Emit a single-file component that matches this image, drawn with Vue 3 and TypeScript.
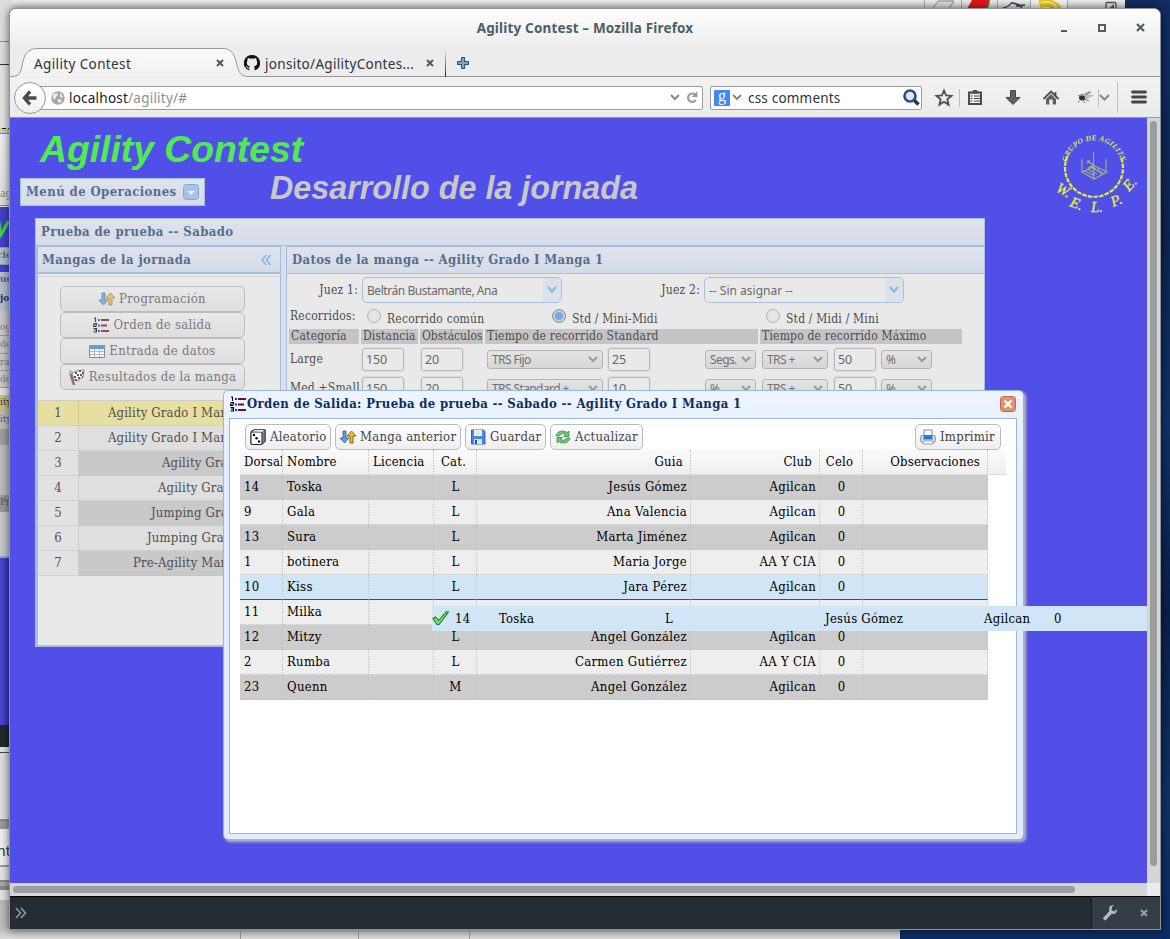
<script setup lang="ts">
interface Entry { dorsal: string; name: string; cat: string; guide: string; club: string; target?: boolean }

const entries: Entry[] = [
  { dorsal: '14', name: 'Toska', cat: 'L', guide: 'Jesús Gómez', club: 'Agilcan' },
  { dorsal: '9', name: 'Gala', cat: 'L', guide: 'Ana Valencia', club: 'Agilcan' },
  { dorsal: '13', name: 'Sura', cat: 'L', guide: 'Marta Jiménez', club: 'Agilcan' },
  { dorsal: '1', name: 'botinera', cat: 'L', guide: 'Maria Jorge', club: 'AA Y CIA' },
  { dorsal: '10', name: 'Kiss', cat: 'L', guide: 'Jara Pérez', club: 'Agilcan', target: true },
  { dorsal: '11', name: 'Milka', cat: '', guide: '', club: '' },
  { dorsal: '12', name: 'Mitzy', cat: 'L', guide: 'Angel González', club: 'Agilcan' },
  { dorsal: '2', name: 'Rumba', cat: 'L', guide: 'Carmen Gutiérrez', club: 'AA Y CIA' },
  { dorsal: '23', name: 'Quenn', cat: 'M', guide: 'Angel González', club: 'Agilcan' },
]

const rounds: string[] = [
  'Agility Grado I Manga 1',
  'Agility Grado I Manga 2',
  'Agility Grado II',
  'Agility Grado III',
  'Jumping Grado II',
  'Jumping Grado III',
  'Pre-Agility Manga 1',
]
const roundIndent: number[] = [29, 29, 83, 79, 72, 68, 54]

const measures = [
  { cat: 'Large', dist: '150', obst: '20', trs: 'TRS Fijo', val: '25', unit: 'Segs.', trm: 'TRS +', max: '50', pct: '%' },
  { cat: 'Med +Small', dist: '150', obst: '20', trs: 'TRS Standard +', val: '10', unit: '%', trm: 'TRS +', max: '50', pct: '%' },
]
</script>

<template>
  <div class="desktop">
    <div class="back-top">
      <svg width="145" height="10" viewBox="0 0 145 10">
        <path d="M.5 0v10M37.500 0v10M73.500 0v10M106.500 0v10M143.500 0v10" stroke="#aaa" />
        <path d="M107 0h36v10h-36z" fill="#f3f3f3" />
        <path d="M14 1h16l-6 9H8z" fill="#ddd" stroke="#888" />
        <path d="M48 0h18l-4 9H43z" fill="#e01616" /><path d="M66 1l-2 8h-4z" fill="#378337" />
        <path d="M79 8q6-1 9-6M88 3q8 1 10 5M92 6l9-1" fill="none" stroke="#345" stroke-width="1.300" />
        <path d="M115 2q12-4 21 6M116 6q10-4 14 4" fill="none" stroke="#eac81c" stroke-width="4" /><path d="M117 3q10-3 16 4" fill="none" stroke="#fbf08c" stroke-width="1.500" />
      </svg>
      <svg class="tray" width="12" height="8"><path d="M1 8V2.500q0-1 1-1h8q1 0 1 1V8" fill="none" stroke="#555" stroke-width="1.300" /><path d="M9 3v5H3.500z" fill="#555" /></svg>
    </div>
    <div class="back-left">
      <div class="strip s1"></div><div class="strip s2"></div>
      <div class="strip s3"><i>ag</i></div><div class="strip s4"><b>y</b></div>
      <div class="strip s5"><em>cio</em></div>
      <div class="strip s6"><em>ue</em><em>jo</em></div>
      <div class="strip s7"><span>og</span><span>der</span><span>rad</span><span>do</span></div>
      <div class="strip s8">ity</div><div class="strip s9">ity</div><div class="strip s10">Pre</div>
      <div class="strip s11"></div><div class="strip s12"></div>
      <div class="strip s14"></div><div class="strip s15">nt</div><div class="strip s16"></div>
    </div>
    <div class="back-bottom"><i></i><i></i><i></i></div>

    <div class="window">
      <div class="titlebar">
        <span class="window-title">Agility Contest – Mozilla Firefox</span>
        <svg class="wbtns" width="86" height="12" viewBox="0 0 86 12">
          <path d="M2 10h6" stroke="#4a6068" stroke-width="2" />
          <rect x="40" y="4" width="6" height="6" fill="none" stroke="#4a6068" stroke-width="2" />
          <path d="M78 3l7 7M85 3l-7 7" stroke="#4a6068" stroke-width="2.200" />
        </svg>
      </div>

      <div class="tabs">
        <svg class="tabshape" width="1150" height="30" viewBox="0 0 1150 30">
          <defs><linearGradient id="tg" x2="0" y2="1"><stop stop-color="#fafafa" /><stop offset="1" stop-color="#f0f0f0" /></linearGradient>
            <linearGradient id="sep" x2="0" y2="1"><stop stop-color="#ececec" /><stop offset="1" stop-color="#222" /></linearGradient></defs>
          <path d="M0 28.500H2C13 28.500 11 18 14 10Q17 .5 27 .5H213Q222 .5 225 10C228 18 227 28.500 238 28.500H1150V30H0z" fill="url(#tg)" />
          <path d="M0 28.500H2C13 28.500 11 18 14 10Q17 .5 27 .5H213Q222 .5 225 10C228 18 227 28.500 238 28.500H1150" fill="none" stroke="#989898" />
          <rect x="435" y="1" width="1" height="28" fill="url(#sep)" />
        </svg>
        <span class="tab-text t1">Agility Contest</span>
        <svg class="x x1" width="8" height="8"><path d="M1 1l6 6M7 1L1 7" stroke="#555" stroke-width="2" /></svg>
        <svg class="gh" width="16" height="16" viewBox="0 0 16 16"><path fill="#111" d="M8 0a8 8 0 0 0-2.700 15.600v-2.200c-2 .4-2.600-.7-2.900-1.600-.3-.6-.7-.8-1-1.100 1.200-.3 1.600 1 2.200 1.600.6.500 1.300.3 1.800.1.100-.6.300-.9.600-1.200C4 11 2.800 10 2.800 7.400c0-1 .4-1.700.9-2.300-.2-.7-.2-1.500.1-2.200.9 0 1.700.5 2.300.9 1.300-.3 2.500-.3 3.800 0 .7-.5 1.500-.9 2.300-.9.300.7.300 1.500.1 2.200.6.700.9 1.400.9 2.300 0 2.600-1.300 3.600-3.300 3.800.5.500.7 1.100.7 2v2.400A8 8 0 0 0 8 0" /></svg>
        <span class="tab-text t2">jonsito/AgilityContes...</span>
        <svg class="x x2" width="8" height="8"><path d="M1 1l6 6M7 1L1 7" stroke="#555" stroke-width="2" /></svg>
        <svg class="plus" width="12" height="12"><path d="M4.500.5h3v4h4v3h-4v4h-3v-4h-4v-3h4z" fill="#7fa3d6" stroke="#1c4a86" /></svg>
      </div>

      <div class="navbar">
        <div class="back"><svg width="16" height="16"><path d="M8 1.500L2.500 8L8 14.500M3 8h11.500" fill="none" stroke="#4a4a4a" stroke-width="3.400" /></svg></div>
        <div class="url">
          <svg width="14" height="14" viewBox="0 0 14 14"><circle cx="7" cy="7" r="6.700" fill="#a6a6a6" /><path d="M2 3l4-1 1 2-2 2-1 3-2-2zM9 2l3 3-1 2-2-1zM7 8l4 1-2 3-2-1z" fill="#ececec" /></svg>
          <span class="url-text">localhost<i>/agility/#</i></span>
          <svg class="chev" width="10" height="7"><path d="M1 1l4 4 4-4" fill="none" stroke="#888" stroke-width="2" /></svg>
          <svg class="reload" width="12" height="13"><path d="M9 3.500A4.200 4.200 0 1 0 9.800 9" fill="none" stroke="#8fa0ac" stroke-width="2.200" /><path d="M11.500 0v6h-6z" fill="#8fa0ac" /></svg>
        </div>
        <div class="search">
          <span class="g">g</span>
          <svg width="10" height="7"><path d="M1 1l4 4 4-4" fill="none" stroke="#888" stroke-width="2" /></svg>
          <span class="search-text">css comments</span>
          <svg class="lens" width="17" height="17"><path d="M11 11l4.500 4.500" stroke="#333" stroke-width="3.500" /><circle cx="7" cy="7" r="5.500" fill="#dce8f7" stroke="#29499b" stroke-width="2.600" /></svg>
        </div>
        <svg class="navicons" width="220" height="34" viewBox="0 0 220 34">
          <path d="M13 9.500l2.100 5 5.400.4-4.200 3.500 1.300 5.300-4.600-3-4.600 3 1.300-5.300-4.200-3.500 5.400-.4z" fill="none" stroke="#4b4b4b" stroke-width="1.800" />
          <path d="M28.500 8v18" stroke="#bbb" />
          <path d="M38 11.500h12v11.500h-12z" fill="#eee" stroke="#4b4b4b" stroke-width="2" /><path d="M40 10.500h2v-1.500h4v1.500h2v2h-8z" fill="#4b4b4b" /><path d="M39.500 15h2M43 15h6M39.500 17.500h2M43 17.500h6M39.500 20h2M43 20h6" stroke="#4b4b4b" stroke-width="1.200" />
          <path d="M79.500 9.500h5v7h4.500L82 23.500l-7-7h4.500z" fill="#606060" stroke="#444" />
          <path d="M112.500 18L120 10.500l7.500 7.500M124.500 11v4" fill="none" stroke="#4b4b4b" stroke-width="1.800" /><path d="M115 18l5-5 5 5v5.500h-3.300v-5h-3.400v5H115z" fill="#606060" />
          <path d="M150 14l8-4 3 1-4 3 6 0-7 4-5 0z" fill="#bbb" /><path d="M147 15l5-2M153 18l5 2M149 20l-2 1M154 14l5-3M152 19l2 3" stroke="#777" /><ellipse cx="151" cy="17" rx="3" ry="2.400" fill="#333" />
          <path d="M167.500 8v18" stroke="#bbb" /><path d="M169 14l4.500 4.500L178 14" fill="none" stroke="#888" stroke-width="2" />
          <path d="M186.500 1v31" stroke="#b9c3cc" />
          <path d="M201.500 11h13M201.500 16h13M201.500 21h13" stroke="#454545" stroke-width="2.800" stroke-linecap="round" />
        </svg>
      </div>

      <div class="middle">
        <div class="page">
          <h1>Agility Contest</h1>
          <div class="menu-panel"><span>Menú de Operaciones</span><i class="tool"><svg width="16" height="16"><rect x=".5" y=".5" width="15" height="15" rx="3" fill="#a8c2e4" stroke="#85a7d5" /><path d="M4 7h8l-4 4z" fill="#eef" /></svg></i></div>
          <h2>Desarrollo de la jornada</h2>

          <section class="main-panel">
            <header class="ph">Prueba de prueba -- Sabado</header>
            <div class="split">
              <div class="west">
                <header class="ph"><span>Mangas de la jornada</span><svg width="10" height="10"><path d="M5 0L1 5l4 5M9.500 0l-4 5 4 5" fill="none" stroke="#82b5df" stroke-width="1.500" /></svg></header>
                <div class="west-body">
                  <div class="btns">
                    <button class="lb"><svg class="fade" width="16" height="14"><path d="M3 1h3v7h3l-4.500 5L0 8h3z" fill="#5ba0d8" stroke="#2b5f98" stroke-width=".8" /><path d="M10 13h3V6h3l-4.500-5L7 6h3z" fill="#f0b631" stroke="#8c6412" stroke-width=".8" /></svg>Programación</button>
                    <button class="lb"><svg class="fade" width="16" height="16" viewBox="0 0 16 16"><path d="M1 1h1.500v4M0.500 6.500h3v1.500h-3v1.500h3M.5 11.500h3v3.500h-3M1 13h2" fill="none" stroke="#000" stroke-width="1.100" /><path d="M5 3h2M5 8.500h2M5 14h2" stroke="#22f" stroke-width="2" /><path d="M8 3h8M8 8.500h6M8 14h8" stroke="#601327" stroke-width="2" /></svg>Orden de salida</button>
                    <button class="lb"><svg class="fade" width="16" height="13"><path d="M.5.5h15v12H.5z" fill="#fff" stroke="#567" /><path d="M0 0h16v4H0z" fill="#2784d0" /><path d="M1 6.500h14M1 9.500h14M5.500 4v8M10.500 4v8" stroke="#9ab" /></svg>Entrada de datos</button>
                    <button class="lb"><svg class="fade" width="16" height="16"><path d="M1 3l4 13" stroke="#73412f" stroke-width="2.500" /><path d="M3 4q4-3 12-3l-1 7q-3 1-5 4l-4-1z" fill="#fff" stroke="#222" stroke-width=".7" /><path d="M6 3h2v2H6zM10 1h2v2h-2zM13 3h2v2h-2zM8 5h2v2H8zM11 5h2v2h-2zM5 7h2v2H5zM9 8h2v2H9zM6 10h2v2H6zM13 7h1v2h-1z" fill="#222" /><circle cx="1.500" cy="3" r="2" fill="#7bc67b" /></svg>Resultados de la manga</button>
                  </div>
                  <div class="rounds">
                    <div v-for="(r, i) in rounds" :key="r" class="round" :class="{ current: i === 0, dark: i > 0 && i % 2 === 0 }">
                      <span class="num">{{ i + 1 }}</span>
                      <span class="rname" :style="{ paddingLeft: roundIndent[i] + 'px' }">{{ r }}</span>
                    </div>
                  </div>
                </div>
              </div>
              <div class="center">
                <header class="ph">Datos de la manga -- Agility Grado I Manga 1</header>
                <div class="form">
                  <div class="judges">
                    <label>Juez 1:</label><div class="combo tight"><span>Beltrán Bustamante, Ana</span><i><svg width="10" height="8"><path d="M1 1l4 4.500L9 1" fill="none" stroke="#86b9e0" stroke-width="2.200" /></svg></i></div>
                    <label class="j2">Juez 2:</label><div class="combo"><span>-- Sin asignar --</span><i><svg width="10" height="8"><path d="M1 1l4 4.500L9 1" fill="none" stroke="#86b9e0" stroke-width="2.200" /></svg></i></div>
                  </div>
                  <div class="radios">
                    <span class="rl">Recorridos:</span>
                    <i class="radio"></i><span>Recorrido común</span>
                    <i class="radio on"></i><span class="wider">Std / Mini-Midi</span>
                    <i class="radio"></i><span>Std / Midi / Mini</span>
                  </div>
                  <div class="heads"><span>Categoría</span><span>Distancia</span><span>Obstáculos</span><span>Tiempo de recorrido Standard</span><span>Tiempo de recorrido Máximo</span></div>
                  <div v-for="m in measures" :key="m.cat" class="mrow">
                    <span class="cat">{{ m.cat }}</span>
                    <span class="inp a">{{ m.dist }}</span><span class="inp b">{{ m.obst }}</span>
                    <span class="pick w116">{{ m.trs }}<svg width="10" height="7"><path d="M1 1l4 4 4-4" fill="none" stroke="#999" stroke-width="2" /></svg></span>
                    <span class="inp c">{{ m.val }}</span>
                    <span class="pick w51">{{ m.unit }}<svg width="10" height="7"><path d="M1 1l4 4 4-4" fill="none" stroke="#999" stroke-width="2" /></svg></span>
                    <span class="pick w66">{{ m.trm }}<svg width="10" height="7"><path d="M1 1l4 4 4-4" fill="none" stroke="#999" stroke-width="2" /></svg></span>
                    <span class="inp d">{{ m.max }}</span>
                    <span class="pick w51b">{{ m.pct }}<svg width="10" height="7"><path d="M1 1l4 4 4-4" fill="none" stroke="#999" stroke-width="2" /></svg></span>
                  </div>
                </div>
              </div>
            </div>
          </section>

          <svg class="club" width="92" height="88" viewBox="0 0 92 88">
            <defs><path id="arcTop" d="M17.500 33A28 28 0 0 1 72.500 33" /></defs>
            <path d="M18.500 26A29 29 0 1 0 71.500 26" fill="none" stroke="#e4ee3c" stroke-width="2.200" stroke-dasharray="4.500 1.200" />
            <text class="ct" textLength="74"><textPath href="#arcTop" startOffset="1" textLength="74">GRUPO DE AGILITY</textPath></text>
            <path d="M33 29v13M44.500 22v26M57 29v13M33 42l12 7 13-7-12-6zM36 41l10 5M38 39l10 5M41 37l10 5M38 31l5 3 4 6 9 4M38 33l3-3M39 38l6-3M48 37l4 7" fill="none" stroke="#a0b580" stroke-width="1.100" />
            <g class="cb">
              <text transform="translate(6 61) rotate(28)">W.</text><text transform="translate(20 76) rotate(20)">E.</text>
              <text transform="translate(42 82)">L.</text><text transform="translate(64 77) rotate(-22)">P.</text><text transform="translate(80 62) rotate(-48)">E.</text>
            </g>
          </svg>

          <section class="dialog">
            <header class="dh">
              <svg width="16" height="16" viewBox="0 0 16 16"><path d="M1 1h1.500v4M0.500 6.500h3v1.500h-3v1.500h3M.5 11.500h3v3.500h-3M1 13h2" fill="none" stroke="#000" stroke-width="1.100" /><path d="M5 3h2M5 8.500h2M5 14h2" stroke="#22f" stroke-width="2" /><path d="M8 3h8M8 8.500h6M8 14h8" stroke="#601327" stroke-width="2" /></svg>
              <span>Orden de Salida: Prueba de prueba -- Sabado -- Agility Grado I Manga 1</span>
              <svg class="close" width="16" height="16"><rect x=".5" y=".5" width="15" height="15" rx="3" fill="#e2906f" stroke="#b9694c" /><path d="M4.500 4.500l7 7M11.500 4.500l-7 7" stroke="#fff" stroke-width="2.400" /></svg>
            </header>
            <div class="db">
              <div class="tb">
                <button class="b1"><svg width="16" height="16"><path d="M1 2.500L4 .8h11.200v11.500l-3 3H1z" fill="#71899a" stroke="#222" /><rect x="1" y="3" width="11" height="12.500" rx="1.500" fill="#fff" stroke="#222" /><path d="M2 2.500L5 1h9l-2 2z" fill="#dde8f0" /><circle cx="4" cy="6" r="1.200" /><circle cx="6.500" cy="9.200" r="1.200" /><circle cx="9" cy="12.500" r="1.200" /></svg>Aleatorio</button>
                <button class="b2"><svg width="16" height="14"><path d="M3 1h3v7h3l-4.500 5L0 8h3z" fill="#5ba0d8" stroke="#2b5f98" stroke-width=".8" /><path d="M10 13h3V6h3l-4.500-5L7 6h3z" fill="#f8b928" stroke="#6b4a08" stroke-width=".8" /></svg>Manga anterior</button>
                <button class="b3"><svg width="16" height="16"><path d="M1.500 1h12l1.500 1.500V15H1.500z" fill="#4a83f0" stroke="#2d62c5" /><path d="M4 1h8v6H4z" fill="#fff" /><path d="M4 10h8v5H4z" fill="#dce5f4" /><path d="M5 11h2v4H5z" fill="#2a55a5" /><path d="M5 3h6M5 5h6" stroke="#bcc" /></svg>Guardar</button>
                <button class="b4"><svg width="16" height="16"><path d="M1 7q1-5 7-5 2 0 4 1.500L14 2v5.500H8.500l2-2Q6 3.500 4.500 7z" fill="#74c476" stroke="#3d8f45" stroke-width=".8" /><path d="M15 9q-1 5-7 5-2 0-4-1.500L2 14V8.500h5.500l-2 2Q10 12.500 11.500 9z" fill="#74c476" stroke="#3d8f45" stroke-width=".8" /></svg>Actualizar</button>
                <button class="b5"><svg width="16" height="16"><path d="M4 1h8v6H4z" fill="#fff" stroke="#889" /><rect x=".7" y="6.500" width="14.600" height="7" rx="2" fill="#dfe3ea" stroke="#7e8796" /><path d="M4 6h8l1 4.500H3z" fill="#1683ea" /><path d="M3 12h10v3H3z" fill="#fff" stroke="#99a" /></svg>Imprimir</button>
              </div>
              <div class="grid-head gr"><span>Dorsal</span><span>Nombre</span><span>Licencia</span><span class="c">Cat.</span><span class="r">Guia</span><span class="r">Club</span><span class="c">Celo</span><span class="r">Observaciones</span></div>
              <div v-for="(e, i) in entries" :key="e.dorsal" class="gr grow" :class="{ dark: i % 2 === 0 && !e.target, target: e.target }">
                <span>{{ e.dorsal }}</span><span>{{ e.name }}</span><span></span><span class="c">{{ e.cat }}</span><span class="r">{{ e.guide }}</span><span class="r">{{ e.club }}</span><span class="c">{{ e.club ? '0' : '' }}</span><span></span>
              </div>
            </div>
          </section>

          <div class="drag">
            <svg width="18" height="16"><path d="M1 8.500l2.500-1.500 3 3.500L14.500 1.500l2 .5L7 14.500H5z" fill="#7be05f" stroke="#1e7d2e" stroke-width="1.100" /></svg>
            <span class="d1">14</span><span class="d2">Toska</span><span class="d3">L</span><span class="d4">Jesús Gómez</span><span class="d5">Agilcan</span><span class="d6">0</span>
          </div>
        </div>
        <div class="vs"><i></i></div>
      </div>
      <div class="hs"><i></i><b></b></div>
      <div class="devbar">
        <svg width="12" height="12"><path d="M1 1l4.500 5L1 11M6 1l4.500 5L6 11" fill="none" stroke="#8d959c" stroke-width="1.700" /></svg>
        <div class="devtools">
          <svg width="16" height="16"><path d="M2 14.500L9 7" stroke="#b5bbc0" stroke-width="3.400" /><path d="M14.500 4.500L12 6.500 9.500 5 10 2l2-1.500Q8-.5 7 3.500q0 5 4 5.500 4 0 4-5z" fill="#b5bbc0" /></svg>
          <svg width="8" height="8"><path d="M1 1l6 6M7 1L1 7" stroke="#9aa1a6" stroke-width="2" /></svg>
        </div>
      </div>
    </div>
  </div>
</template>

<style>
html, body { margin: 0; overflow: hidden; }
</style>

<style scoped>
* { box-sizing: border-box; }
svg { display: block; flex: none; }
i, em { font-style: normal; }
.desktop { position: relative; width: 1170px; height: 939px; overflow: hidden; background: linear-gradient(#102c62, #0c2452 25%, #0f3066 45%, #091f4c 65%, #0f3064 85%, #0c2b60); font-family: "DejaVu Serif Condensed", "DejaVu Serif", serif; font-size: 13px; white-space: nowrap; }
.back-top { position: absolute; left: 0; top: 0; width: 1125px; height: 40px; background: linear-gradient(#ededed, #d4d4d4 9px); }
.back-top svg { position: absolute; left: 924px; top: 0; }
.back-top .tray { left: 1105px; top: 1px; }
.back-bottom { position: absolute; left: 0; top: 900px; width: 900px; height: 39px; background: linear-gradient(#bbb 28px, #ddd); display: flex; padding-left: 240px; align-items: flex-end; }
.back-bottom i { width: 118px; height: 8px; border-left: 1px solid #999; }
.back-bottom i:nth-child(2) { width: 111px; }
.back-left { position: absolute; left: 0; top: 0; width: 12px; height: 939px; background: linear-gradient(#ddd 60px, #e4e4e4); overflow: hidden; }
.strip { position: absolute; left: 0; width: 10px; overflow: hidden; color: #555; font-size: 10px; line-height: 14px; }
.s1 { top: 41px; height: 24px; background: #ddd; border-top: 1px solid #888; border-bottom: 1px solid #243542; }
.s2 { top: 66px; height: 68px; background: #e4e4e4; border-bottom: 1px solid #888; box-shadow: inset 0 -4px 0 #ccc; }
.s2::after { content: ""; display: block; height: 1px; margin-top: 62px; background: repeating-linear-gradient(90deg, #e7df2c 0 2px, #111 2px 6px); }
.s3 { top: 134px; height: 72px; padding-top: 52px; background: linear-gradient(#eee, #ddd); font-family: "Noto Sans", sans-serif; border-bottom: 1px solid #888; color: #888; }
.s4 { top: 207px; height: 40px; background: #4440c8; color: #43d33d; font: italic bold 26px/38px "Liberation Sans", sans-serif; }
.s4 b { margin-left: -5px; }
.s5 { top: 247px; height: 18px; background: #b5bccb; border: 1px solid #86a2ca; border-width: 1px 0; }
.s6 { top: 265px; height: 46px; background: #b6bccb; border-top: 7px solid #4440c8; display: flex; flex-direction: column; gap: 5px; font-weight: bold; color: #526280; }
.s6 em:last-child { color: #1c3560; }
.s5 em { font-weight: bold; color: #526280; margin-left: -3px; }
.s7 { top: 311px; height: 77px; padding-top: 9px; background: #c7c7c7; display: flex; flex-direction: column; gap: 1px; }
.s7 span { height: 17px; border-bottom: 1px solid #999; color: #777; }
.s8 { top: 395px; height: 17px; background: #c7c07f; color: #333; }
.s9 { top: 412px; height: 50px; background: linear-gradient(#bbb 17px, #9e9e9e 17px 33px, #bbb 33px); }
.s10 { top: 462px; height: 96px; background: linear-gradient(#bbb 33px, #999 33px 50px, #c7c7c7 50px); padding-top: 33px; border-bottom: 2px solid #8cabc9; }
.s11 { top: 558px; height: 167px; background: linear-gradient(90deg, #4a47d8, #3834a8); }
.s12 { top: 725px; height: 22px; background: #22272e; }
.s14 { top: 752px; height: 66px; background: #ddd; border-top: 1px dashed #333; }
.s15 { top: 819px; height: 48px; border-top: 2px solid #888; border-bottom: 2px solid #999; background: linear-gradient(#999 8px, #eee 8px); padding-top: 20px; font: 14px "Noto Sans", sans-serif; color: #2e3436; text-indent: -3px; }
.s16 { top: 880px; height: 10px; border: solid #888; border-width: 2px 0 4px; background: #aaa; }

.window { position: absolute; left: 9px; top: 8px; width: 1152px; height: 922px; border: 1px solid #929292; border-radius: 7px 7px 0 0; overflow: hidden; background: #ececec; display: flex; flex-direction: column; box-shadow: 0 0 8px rgba(0, 0, 0, .6); font-size: 13px; }
.titlebar { height: 39px; background: linear-gradient(#fefefe, #ececec); display: flex; align-items: center; position: relative; flex: none; padding-bottom: 1px; }
.window-title { width: 1150px; text-align: center; font: bold 13.500px "Noto Sans", sans-serif; color: #4b5f67; letter-spacing: .17px; }
.wbtns { position: absolute; right: 15px; top: 12px; }
.tabs { position: relative; height: 30px; display: flex; align-items: center; flex: none; }
.tabshape { position: absolute; left: 0; top: 0; }
.tab-text { position: relative; font: 13.500px/28px "Noto Sans", sans-serif; color: #2e3436; padding-top: 2px; letter-spacing: .3px; }
.t1 { margin-left: 24px; width: 182px; letter-spacing: .38px; }
.x { position: relative; margin-bottom: 1px; }
.gh { position: relative; margin-left: 20px; }
.t2 { margin-left: 5px; width: 161px; }
.plus { position: relative; margin-left: 23px; margin-bottom: 1px; }
.navbar { height: 40px; display: flex; align-items: center; border-bottom: 1px solid #999; background: linear-gradient(#f2f2f2, #ebebeb); flex: none; }
.back { width: 32px; height: 32px; border: 1px solid #8d99a7; border-radius: 50%; background: linear-gradient(#fff, #f0f0f0); display: grid; place-items: center; margin-left: 4px; position: relative; z-index: 1; }
.url { height: 24px; width: 665px; margin-left: -8px; border: 1px solid #9c9c9c; border-radius: 2px; background: #fff; display: flex; align-items: center; padding-left: 12px; }
.url-text { font: 13.500px "Noto Sans", sans-serif; color: #222; margin-left: 4px; width: 601px; letter-spacing: .23px; }
.url-text i { color: #8e8e8e; }
.url .reload { margin-left: 6px; }
.search { height: 24px; width: 212px; margin-left: 7px; border: 1px solid #9c9c9c; border-radius: 2px; background: #fff; display: flex; align-items: center; padding-left: 3px; }
.g { width: 16px; height: 16px; background: #4487f4; color: #fff; border-radius: 1px; font: 16px/11px "Liberation Serif", serif; text-align: center; margin-right: 2px; }
.search-text { font: 13.500px "Noto Sans", sans-serif; color: #2e3436; margin-left: 6px; width: 155px; letter-spacing: .2px; }
.navicons { margin-left: 9px; }
.middle { display: flex; height: 765px; flex: none; }
.page { position: relative; width: 1137px; height: 765px; background: #5050e9; overflow: hidden; }
.vs { width: 13px; background: #d5d5d5; padding: 3px 3px 0; }
.vs i { display: block; width: 7px; height: 745px; border-radius: 4px; background: #9b9c9d; }
.hs { height: 14px; flex: none; background: #d5d5d5; display: flex; padding-left: 3px; align-items: center; justify-content: space-between; border-bottom: 1px solid #000; }
.hs i { width: 1062px; height: 7px; border-radius: 4px; background: #9b9c9d; }
.hs b { width: 13px; height: 13px; background: #ebebeb; }
.devbar { height: 32px; background: #252c33; display: flex; align-items: center; padding-left: 5px; justify-content: space-between; flex: none; }
.devtools { width: 69px; height: 32px; border-left: 1px solid #181d20; background: #343c45; display: flex; align-items: center; padding-left: 10px; gap: 22px; }

h1, h2 { position: absolute; margin: 0; font: italic bold 37.300px/40px "Liberation Sans", Arial, sans-serif; color: #51ea51; }
h1 { left: 30px; top: 11px; }
h2 { left: 260px; top: 50px; font-size: 32.300px; color: #c8c8cb; }
.menu-panel { position: absolute; left: 10px; top: 60px; width: 185px; height: 28px; border: 1px solid #a5bedf; background: linear-gradient(#dfe3ec, #d5dbe7); display: flex; align-items: center; justify-content: space-between; padding: 0 5px; font-weight: bold; color: #566c8f; letter-spacing: .42px; }
.menu-panel span { padding-bottom: 2px; }
.main-panel { position: absolute; left: 25px; top: 100px; width: 950px; height: 429px; border: solid #a5bfdf; border-width: 1px 1px 3px 1px; background: #e9e9e9; }
.ph { height: 27px; background: linear-gradient(#dfe2ea, #d5dce8); border-bottom: 1px solid #a5bedf; font-weight: bold; color: #566c8f; line-height: 23px; padding: 0 0 2px 5px; display: flex; align-items: center; letter-spacing: .4px; }
.split { display: flex; height: 399px; background: #d9e0ea; }
.west { width: 245px; border: 1px solid #a5bedf; border-bottom: 0; border-left-width: 2px; }
.west .ph { justify-content: space-between; padding: 0 9px 0 4px; height: 27px; border-bottom-width: 2px; }
.west-body { height: 371px; background: #e9e9e9; border-top: 1px solid #e9e9e9; }
.btns { border-top: 1px solid #d4d4d4; margin-top: 1px; padding: 9px 0 10px 22px; }
button { font: 13px/18px "DejaVu Serif Condensed", "DejaVu Serif", serif; display: flex; align-items: center; white-space: nowrap; gap: 4px; padding: 0; letter-spacing: .25px; }
.lb { width: 185px; height: 26px; justify-content: center; border: 1px solid #bcbcbc; border-radius: 5px; background: linear-gradient(#e9e9e9, #dedede); color: #7a7a7a; letter-spacing: .28px; }
.fade { opacity: .7; }
.rounds { border-top: 1px solid #ccc; letter-spacing: .15px; }
.round { height: 25px; display: flex; background: #dfdfdf; color: #505050; line-height: 23px; }
.round.dark { background: #c9c9c9; }
.round.current, .round.current .num { background: #e7dfa0; }
.num { width: 41px; text-align: center; background: #e2e2e2; border-right: 1px dotted #bbb; border-bottom: 1px dotted #c2c2c2; }
.rname { flex: 1; overflow: hidden; border-bottom: 1px dotted #c2c2c2; }
.center { width: 698px; margin-left: 5px; border: 1px solid #a5bedf; border-right: 0; border-bottom: 0; background: #e9e9e9; }
.center > .ph { letter-spacing: .34px; }
.form { color: #4b4b4b; font-size: 12px; padding-left: 2px; letter-spacing: .2px; }
.judges { display: flex; align-items: center; padding: 3px 0 0; }
.judges label { width: 69px; text-align: right; margin-right: 4px; }
.judges .j2 { width: 138px; }
.combo { width: 200px; height: 26px; border: 1px solid #a5bfdf; border-radius: 5px; display: flex; align-items: center; padding-left: 4px; color: #6a6a6a; font: 12px "Noto Sans", sans-serif; overflow: hidden; letter-spacing: 0; }
.combo.tight { letter-spacing: -.45px; }
.combo span { flex: 1; }
.combo i { width: 18px; height: 24px; background: #dbe2ec; display: grid; place-items: center; }
.radios { display: flex; height: 26px; align-items: center; }
.rl { width: 78px; padding: 0 0 1px 1px; }
.radio { width: 14px; height: 14px; border-radius: 50%; border: 1px solid #b5b5b5; background: radial-gradient(#eaeaea, #ddd); }
.radio.on { background: #78aae2; border: 1px solid #8899aa; box-shadow: inset 0 0 0 2px #ccc; }
.radios > span:not(.rl) { padding: 5px 0 0 6px; width: 171px; }
.radios > span.wider:not(.rl) { width: 200px; }
.heads { display: flex; gap: 2px; }
.heads span { height: 15px; line-height: 14px; background: #c4c4c4; padding-left: 2px; width: 70px; overflow: hidden; }
.heads span:nth-child(2) { width: 57px; letter-spacing: .15px; }
.heads span:nth-child(3) { width: 63px; letter-spacing: 0; }
.heads span:nth-child(4) { width: 273px; }
.heads span:nth-child(5) { width: 202px; }
.mrow { display: flex; height: 29px; align-items: center; padding-top: 2px; }
.cat { width: 73px; padding: 0 0 2px 1px; }
.inp { width: 42px; height: 23px; border: 1px solid #b8b8b8; border-radius: 3px; box-shadow: 0 0 0 1px #dedede; font: 12.500px/22px "Noto Sans", sans-serif; color: #666; padding-left: 3px; letter-spacing: -.2px; }
.inp.b { margin-left: 17px; } .inp.c { margin-left: 5px; } .inp.d { margin-left: 6px; }
.pick { height: 19px; border: 1px solid #b3b3b3; border-radius: 3px; background: linear-gradient(#e4e4e4, #d6d6d6); font: 12px/18px "Noto Sans", sans-serif; color: #707070; padding: 0 4px; display: flex; align-items: center; justify-content: space-between; letter-spacing: -.6px; }
.w116 { width: 116px; margin-left: 24px; } .w51 { width: 51px; margin-left: 55px; } .w66 { width: 66px; margin-left: 6px; } .w51b { width: 51px; margin-left: 5px; }
.club { position: absolute; left: 1039px; top: 12px; }
.ct { font: italic bold 7.500px "Liberation Serif", serif; fill: #dce94a; }
.cb { font: italic 15px "Liberation Serif", serif; fill: #e6f03c; stroke: #e6f03c; stroke-width: .3px; }

.dialog { position: absolute; left: 213px; top: 272px; width: 801px; height: 450px; padding: 0 6px 5px 5px; border: 1px solid #95b7e6; border-radius: 5px; background: linear-gradient(#eef4ff, #e0ecff 20%); box-shadow: 2px 2px 3px #bbb; }
.dh { height: 27px; display: flex; align-items: center; font-weight: bold; color: #0e2d5f; padding: 0 1px; letter-spacing: .345px; }
.dh span { padding-bottom: 2px; margin-left: 1px; }
.dh svg { margin-bottom: 1px; }
.dh .close { margin-left: auto; margin-right: 0; }
.db { height: 416px; border: 1px solid #95b7e6; background: #fff; padding-left: 10px; color: #000; font-size: 13px; letter-spacing: .3px; }
.tb { display: flex; height: 31px; padding: 5px 15px 0 5px; gap: 4px; }
.tb button { height: 26px; border: 1px solid #bbb; border-radius: 5px; background: linear-gradient(#fff, #eee); color: #444; padding-left: 4px; }
.b1 { width: 86px; } .b2 { width: 126px; } .b3 { width: 81px; } .b4 { width: 93px; } .b5 { width: 86px; margin-left: auto; }
.gr { display: grid; grid-template-columns: 43px 86px 65px 43px 214px 129px 43px 125px; width: 748px; height: 25px; line-height: 23px; background: #eee; }
.gr span { padding: 0 3px 0 4px; border-right: 1px dotted #c4c4c4; border-bottom: 1px dotted #c4c4c4; overflow: hidden; }
.gr .c { text-align: center; } .gr .r { text-align: right; }
.grid-head { width: 766px; background: linear-gradient(#fafafa, #efefef); border-bottom: 1px solid #ddd; letter-spacing: .22px; }
.grid-head span { border-bottom: 0; }
.grid-head span.c { padding: 0 6px 0 3px; }
.grid-head span.r { padding-right: 7px; }
.grow.dark { background: #ccc; }
.grow.target { background: #d0e5f5; }
.grow.target span { border-bottom: 1px solid #f00; }
.drag { position: absolute; left: 422px; top: 488px; width: 730px; height: 25px; background: #d0e5f5; display: flex; align-items: center; color: #000; padding-bottom: 1px; letter-spacing: .25px; }
.d1 { width: 44px; margin-left: 5px; } .d2 { width: 166px; } .d3 { width: 160px; } .d4 { width: 159px; } .d5 { width: 70px; }
</style>
